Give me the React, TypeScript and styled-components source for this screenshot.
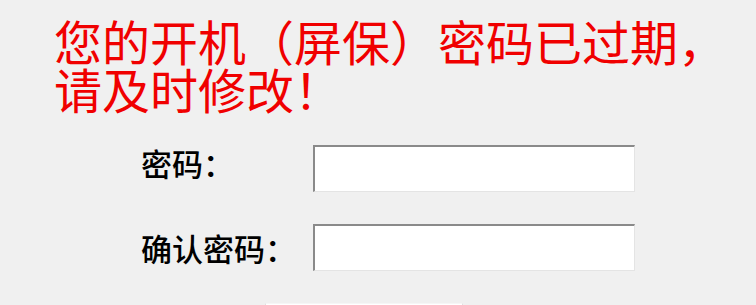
import styled, { createGlobalStyle } from 'styled-components'

const GlobalStyle = createGlobalStyle`
  html, body {
    margin: 0;
    padding: 0;
    background: #f0f0f0;
    overflow: hidden;
  }
  body {
    width: 756px;
    height: 305px;
    font-family: "Noto Sans CJK SC", "Noto Sans", sans-serif;
  }
`

const Page = styled.div`
  width: 756px;
  height: 305px;
  display: flex;
  flex-direction: column;
  overflow: hidden;
`

const Title = styled.h1`
  margin: 0;
  padding: 16px 0 0 54px;
  color: #f00000;
  font-size: 48px;
  font-weight: 400;
  line-height: 48px;
  white-space: nowrap;
`

const Form = styled.div`
  display: flex;
  flex-direction: column;
  gap: 32px;
  margin-top: 33px;
  padding-left: 141px;
`

const Row = styled.label<{ $lift?: number }>`
  display: flex;
  align-items: center;
  height: 47px;

  & > span {
    transform: translateY(${(p) => -(p.$lift ?? 0)}px);
  }
`

const Label = styled.span`
  width: 172px;
  flex: none;
  color: #000;
  font-size: 31px;
  font-weight: 500;
  line-height: 1;
  white-space: nowrap;
`

const Field = styled.input`
  box-sizing: border-box;
  width: 322px;
  height: 47px;
  margin: 0;
  padding: 0 6px;
  background: #fff;
  border-style: solid;
  border-width: 2px 1px 1px 2px;
  border-color: #8a8a8a #e4e4e4 #e4e4e4 #8a8a8a;
  outline: none;
  font-size: 20px;
`

const Actions = styled.div`
  display: flex;
  padding-left: 265px;
  margin-top: 32px;
`

const Button = styled.button`
  width: 198px;
  height: 40px;
  background: #fff;
  border: 1px solid #e0e0e0;
  border-top-color: #f6f6f6;
  font-size: 20px;
  font-family: inherit;
  color: transparent;
`

export default function App() {
  return (
    <>
      <GlobalStyle />
      <Page>
        <Title>
          您的开机（屏保）密码已过期，
          <br />
          请及时修改！
        </Title>
        <Form>
          <Row $lift={6}>
            <Label>密码：</Label>
            <Field type="password" />
          </Row>
          <Row>
            <Label>确认密码：</Label>
            <Field type="password" />
          </Row>
        </Form>
        <Actions>
          <Button aria-label="确定" />
        </Actions>
      </Page>
    </>
  )
}
